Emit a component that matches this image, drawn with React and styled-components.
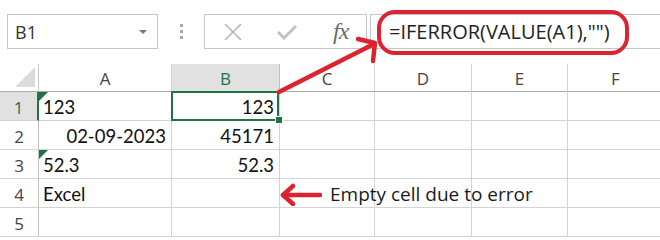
import React from 'react';
import styled, { createGlobalStyle, css } from 'styled-components';

const GlobalStyle = createGlobalStyle`
  html, body {
    margin: 0;
    padding: 0;
    background: #fff;
    overflow: hidden;
  }
  body {
    font-family: "Open Sans", "Noto Sans", sans-serif;
  }
`;

const excelGreen = '#217346';
const annotationRed = '#dc2330';

const Page = styled.div`
  position: relative;
  width: 660px;
  height: 240px;
  overflow: hidden;
`;

const Toolbar = styled.div`
  display: flex;
  align-items: center;
  padding: 14px 0 0 7px;
  height: 35px;
`;

const NameBox = styled.div`
  box-sizing: border-box;
  width: 151px;
  height: 35px;
  border: 1px solid #c6c6c6;
  display: flex;
  align-items: center;
  justify-content: space-between;
  padding: 0 10px 0 7px;
  font-size: 18px;
  color: #333;
`;

const Caret = styled.span`
  width: 0;
  height: 0;
  border-left: 4px solid transparent;
  border-right: 4px solid transparent;
  border-top: 4px solid #777;
`;

const Grip = styled.div`
  width: 46px;
  display: flex;
  flex-direction: column;
  align-items: center;
  gap: 3px;

  span {
    width: 3px;
    height: 3px;
    background: #a8a8a8;
  }
`;

const FxBox = styled.div`
  box-sizing: border-box;
  width: 163px;
  height: 35px;
  border: 1px solid #c6c6c6;
  display: flex;
  align-items: center;
  padding-left: 18px;
`;

const ToolIcon = styled.span`
  width: 54px;
  display: flex;
  align-items: center;
`;

const FxLabel = styled.span`
  font-family: "Liberation Serif", serif;
  font-style: italic;
  font-size: 24px;
  color: #6b6b6b;
  letter-spacing: -1px;
  margin-left: 2px;
`;

const FormulaBox = styled.div`
  box-sizing: border-box;
  flex: 1;
  height: 35px;
  margin-left: 3px;
  border: 1px solid #c6c6c6;
  border-right: none;
  display: flex;
  align-items: center;
  padding-left: 18px;
  font-size: 20px;
  color: #222;
`;

const Sheet = styled.div`
  display: grid;
  grid-template-columns: 39px 133px 108px 95px 97px 96px 96px;
  grid-template-rows: 28px repeat(5, 29px);
  margin-top: 15px;
  width: 664px;
`;

const Corner = styled.div`
  position: relative;
  box-sizing: border-box;
  border-right: 1px solid #c8c8c8;
  border-bottom: 1px solid #ababab;

  &::after {
    content: '';
    position: absolute;
    right: 3px;
    bottom: 4px;
    width: 0;
    height: 0;
    border-left: 20px solid transparent;
    border-bottom: 20px solid #dcdcdc;
  }
`;

const ColHeader = styled.div`
  box-sizing: border-box;
  display: flex;
  align-items: center;
  justify-content: center;
  font-size: 17px;
  color: #444;
  border-right: 1px solid #d4d4d4;
  border-bottom: 1px solid #ababab;
  padding-top: 2px;

  ${(p) =>
    p.$active &&
    css`
      background: #e1e1e1;
      color: ${excelGreen};
      border-right-color: #c0c0c0;
    `}
`;

const RowHeader = styled.div`
  box-sizing: border-box;
  display: flex;
  align-items: center;
  justify-content: center;
  font-size: 17px;
  color: #444;
  border-right: 1px solid #c0c0c0;
  border-bottom: 1px solid #d4d4d4;
  padding-top: 2px;

  ${(p) =>
    p.$active &&
    css`
      background: #e1e1e1;
      color: ${excelGreen};
      border-right: 2px solid ${excelGreen};
    `}
`;

const Cell = styled.div`
  position: relative;
  box-sizing: border-box;
  border-right: 1px solid #d4d4d4;
  border-bottom: 1px solid #d4d4d4;
  font-family: Lato, "Open Sans", sans-serif;
  font-size: 18.5px;
  color: #111;
  line-height: 29px;
  padding: 1px 5px 0 4px;
  text-align: ${(p) => p.$align || 'left'};
  white-space: nowrap;

  ${(p) =>
    p.$flag &&
    css`
      &::before {
        content: '';
        position: absolute;
        left: 0;
        top: 0;
        border-top: 9px solid ${excelGreen};
        border-right: 9px solid transparent;
      }
    `}

  ${(p) =>
    p.$selected &&
    css`
      &::after {
        content: '';
        position: absolute;
        inset: -1px 0 -1px -1px;
        border: 2px solid ${excelGreen};
      }
    `}
`;

const FillHandle = styled.span`
  position: absolute;
  right: -4px;
  bottom: -4px;
  width: 6px;
  height: 6px;
  background: ${excelGreen};
  border: 1px solid #fff;
  z-index: 2;
`;

const Overlay = styled.svg`
  position: absolute;
  left: 0;
  top: 0;
  pointer-events: none;
`;

const Note = styled.div`
  position: absolute;
  left: 280px;
  top: 179px;
  height: 29px;
  display: flex;
  align-items: center;
  gap: 8px;
  font-size: 19px;
  color: #1a1a1a;
`;

const columns = ['A', 'B', 'C', 'D', 'E', 'F'];

const rows = [
  [{ v: '123', flag: true }, { v: '123', align: 'right', selected: true }],
  [{ v: '02-09-2023', align: 'right' }, { v: '45171', align: 'right' }],
  [{ v: '52.3', flag: true }, { v: '52.3', align: 'right' }],
  [{ v: 'Excel' }],
  [],
];

const App = () => {
  return (
    <>
      <GlobalStyle />
      <Page>
        <Toolbar>
          <NameBox>
            B1
            <Caret />
          </NameBox>
          <Grip>
            <span />
            <span />
            <span />
          </Grip>
          <FxBox>
            <ToolIcon>
              <svg width="20" height="20" viewBox="0 0 20 20">
                <path d="M2 2 L18 18 M18 2 L2 18" stroke="#b5b5b5" strokeWidth="1.6" fill="none" />
              </svg>
            </ToolIcon>
            <ToolIcon>
              <svg width="20" height="16" viewBox="0 0 20 16">
                <path d="M1 8 L7 14 L19 2" stroke="#c2c2c2" strokeWidth="3" fill="none" />
              </svg>
            </ToolIcon>
            <FxLabel>fx</FxLabel>
          </FxBox>
          <FormulaBox>=IFERROR(VALUE(A1),"")</FormulaBox>
        </Toolbar>

        <Sheet>
          <Corner />
          {columns.map((c) => (
            <ColHeader key={c} $active={c === 'B'}>
              {c}
            </ColHeader>
          ))}
          {rows.map((row, r) => (
            <React.Fragment key={r}>
              <RowHeader $active={r === 0}>{r + 1}</RowHeader>
              {columns.map((c, i) => {
                const cell = row[i] || {};
                return (
                  <Cell key={c} $align={cell.align} $flag={cell.flag} $selected={cell.selected}>
                    {cell.v}
                    {cell.selected && <FillHandle />}
                  </Cell>
                );
              })}
            </React.Fragment>
          ))}
        </Sheet>

        <Overlay width="660" height="240" viewBox="0 0 660 240">
          <rect
            x="379"
            y="12"
            width="248"
            height="41"
            rx="16"
            fill="none"
            stroke={annotationRed}
            strokeWidth="4"
          />
          <g stroke={annotationRed} strokeWidth="4.5" strokeLinecap="round" strokeLinejoin="round" fill="none">
            <path d="M279 92 L374 44" />
            <path d="M358 39 L375 43 L373 61" />
          </g>
        </Overlay>

        <Note>
          <svg width="42" height="24" viewBox="0 0 42 24">
            <g stroke={annotationRed} strokeWidth="4.5" strokeLinecap="round" strokeLinejoin="round" fill="none">
              <path d="M3 13 L40 13" />
              <path d="M13 4 L3 13 L13 22" />
            </g>
          </svg>
          <span>Empty cell due to error</span>
        </Note>
      </Page>
    </>
  );
};

export default App;
